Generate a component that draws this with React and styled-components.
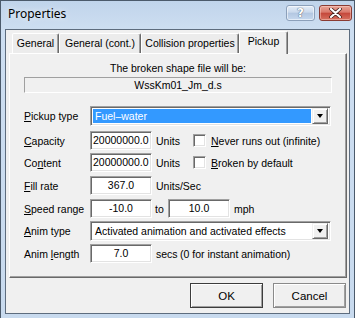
import React from "react";
import styled, { createGlobalStyle, css } from "styled-components";

const GlobalStyle = createGlobalStyle`
  html, body {
    margin: 0;
    padding: 0;
    background: #ffffff;
  }
  body {
    font-family: "Liberation Sans", Arial, sans-serif;
    font-size: 10.5px;
    color: #000;
  }
`;

const TABS = ["General", "General (cont.)", "Collision properties", "Pickup"];
const TAB_WIDTHS = [47, 82, 98, 49];

function PropertiesDialog() {
  return (
    <Window>
      <TitleBar>
        <Title>Properties</Title>
        <CaptionButtons>
          <HelpButton>?</HelpButton>
          <CloseButton>
            <svg width="13" height="10" viewBox="0 0 13 10">
              <path
                d="M2 1 L11 9 M11 1 L2 9"
                stroke="#3b1a16"
                strokeWidth="3.6"
                strokeLinecap="round"
              />
              <path
                d="M2 1 L11 9 M11 1 L2 9"
                stroke="#ffffff"
                strokeWidth="2.2"
                strokeLinecap="round"
              />
            </svg>
          </CloseButton>
        </CaptionButtons>
      </TitleBar>

      <Client>
        <TabStrip>
          {TABS.map((t, i) => (
            <Tab key={t} $w={TAB_WIDTHS[i]} $active={i === 3}>
              {t}
            </Tab>
          ))}
        </TabStrip>

        <Panel>
          <Heading>The broken shape file will be:</Heading>
          <FileField>WssKm01_Jm_d.s</FileField>

          <FormRow $top={13} $h={20}>
            <FieldLabel>
              <u>P</u>ickup type
            </FieldLabel>
            <ComboBox $h={20}>
              <ComboValue $selected>Fuel–water</ComboValue>
              <DropButton>
                <Arrow />
              </DropButton>
            </ComboBox>
          </FormRow>

          <FormRow $top={5}>
            <FieldLabel>
              <u>C</u>apacity
            </FieldLabel>
            <EditBox $align="left">20000000.0</EditBox>
            <UnitText $w={37}>Units</UnitText>
            <CheckBox />
            <CheckText>
              <u>N</u>ever runs out (infinite)
            </CheckText>
          </FormRow>

          <FormRow $top={3}>
            <FieldLabel>
              Co<u>n</u>tent
            </FieldLabel>
            <EditBox $align="left">20000000.0</EditBox>
            <UnitText $w={37}>Units</UnitText>
            <CheckBox />
            <CheckText>
              <u>B</u>roken by default
            </CheckText>
          </FormRow>

          <FormRow $top={4}>
            <FieldLabel>
              <u>F</u>ill rate
            </FieldLabel>
            <EditBox>367.0</EditBox>
            <UnitText>Units/Sec</UnitText>
          </FormRow>

          <FormRow $top={4}>
            <FieldLabel>
              <u>S</u>peed range
            </FieldLabel>
            <EditBox>-10.0</EditBox>
            <UnitText $w={13} $gap={3}>to</UnitText>
            <EditBox>10.0</EditBox>
            <UnitText>mph</UnitText>
          </FormRow>

          <FormRow $top={3} $h={20}>
            <FieldLabel>
              <u>A</u>nim type
            </FieldLabel>
            <ComboBox $h={20}>
              <ComboValue>Activated animation and activated effects</ComboValue>
              <DropButton>
                <Arrow />
              </DropButton>
            </ComboBox>
          </FormRow>

          <FormRow $top={3}>
            <FieldLabel>
              Anim <u>l</u>ength
            </FieldLabel>
            <EditBox>7.0</EditBox>
            <UnitText $w={24}>secs</UnitText>
            <UnitText $gap={0}>(0 for instant animation)</UnitText>
          </FormRow>
        </Panel>

        <ButtonRow>
          <DialogButton $default>OK</DialogButton>
          <DialogButton>Cancel</DialogButton>
        </ButtonRow>
      </Client>
    </Window>
  );
}

export default function App() {
  return (
    <>
      <GlobalStyle />
      <PropertiesDialog />
    </>
  );
}

// Window frame

const Window = styled.div`
  width: 355px;
  height: 318px;
  box-sizing: border-box;
  border: 1px solid #4b5a6b;
  border-bottom: none;
  background: linear-gradient(to bottom, #c0d4eb 0px, #cddef1 28px, #c8daee 100%);
  display: flex;
  flex-direction: column;
`;

const TitleBar = styled.div`
  height: 28px;
  flex: none;
  display: flex;
  align-items: flex-start;
  justify-content: space-between;
  padding: 3px 2px 0 7px;
  box-sizing: border-box;
`;

const Title = styled.div`
  font-family: "Noto Sans", "Open Sans", sans-serif;
  font-size: 12px;
  line-height: 20px;
  color: #000;
  text-shadow: 0 0 6px rgba(255, 255, 255, 0.9);
`;

const CaptionButtons = styled.div`
  display: flex;
  gap: 4px;
  padding-top: 1px;
`;

const captionBase = css`
  height: 16px;
  box-sizing: border-box;
  border-radius: 3px;
  display: flex;
  align-items: center;
  justify-content: center;
`;

const HelpButton = styled.div`
  ${captionBase}
  width: 29px;
  border: 1px solid #8ca0ba;
  background: linear-gradient(to bottom, #e4edf8 0%, #cad9ec 45%, #b3c7e1 50%, #c6d8ee 100%);
  box-shadow: inset 0 0 0 1px rgba(255, 255, 255, 0.55);
  font-family: "DejaVu Sans", sans-serif;
  font-weight: bold;
  font-size: 12px;
  color: #ffffff;
  text-shadow: 0 0 1px #4a5a70, 0 0 1px #4a5a70;
`;

const CloseButton = styled.div`
  ${captionBase}
  width: 33px;
  border: 1px solid #8a3b33;
  background: linear-gradient(to bottom, #e9a497 0%, #d9786a 45%, #c4473a 50%, #d6705f 100%);
  box-shadow: inset 0 0 0 1px rgba(255, 220, 210, 0.45);
`;

const Client = styled.div`
  flex: 1;
  margin: 0 4px 4px 4px;
  border: 1px solid #5d6c7e;
  background: #f0f0f0;
  display: flex;
  flex-direction: column;
  box-sizing: border-box;
`;

// Tabs

const TabStrip = styled.div`
  height: 23px;
  flex: none;
  display: flex;
  align-items: flex-end;
  padding-left: 6px;
`;

const Tab = styled.div`
  width: ${(p) => p.$w}px;
  height: ${(p) => (p.$active ? 23 : 20)}px;
  margin-bottom: ${(p) => (p.$active ? -1 : 0)}px;
  box-sizing: border-box;
  border: 1px solid;
  border-bottom: none;
  border-color: #ffffff #696969 transparent #ffffff;
  box-shadow: inset -1px 0 #a0a0a0;
  border-radius: 2px 2px 0 0;
  background: ${(p) => (p.$active ? "#f0f0f0" : "#ececec")};
  position: relative;
  z-index: ${(p) => (p.$active ? 2 : 1)};
  display: flex;
  align-items: ${(p) => (p.$active ? "flex-start" : "center")};
  padding-top: ${(p) => (p.$active ? 3 : 0)}px;
  justify-content: center;
  white-space: nowrap;
  line-height: 13px;
`;

const Panel = styled.div`
  height: 225px;
  flex: none;
  margin: 0 2px 0 3px;
  box-sizing: border-box;
  border: 1px solid;
  border-color: #ffffff #696969 #696969 #ffffff;
  box-shadow: inset -1px -1px #a0a0a0;
  background: #f0f0f0;
  padding: 7px 14px 0 14px;
  display: flex;
  flex-direction: column;
  position: relative;
  z-index: 1;
`;

const Heading = styled.div`
  height: 14px;
  line-height: 14px;
  text-align: center;
`;

const FileField = styled.div`
  margin-top: 2px;
  height: 16px;
  box-sizing: border-box;
  border: 1px solid;
  border-color: #a0a0a0 #ffffff #ffffff #a0a0a0;
  line-height: 14px;
  text-align: center;
`;

// Form rows

const FormRow = styled.div`
  display: flex;
  align-items: center;
  height: ${(p) => p.$h || 19}px;
  margin-top: ${(p) => p.$top}px;
  white-space: nowrap;
`;

const FieldLabel = styled.div`
  width: 66px;
  flex: none;
`;

const sunken = css`
  box-sizing: border-box;
  border: 1px solid;
  border-color: #a0a0a0 #ffffff #ffffff #a0a0a0;
  box-shadow: inset 1px 1px #696969, inset -1px -1px #e3e3e3;
  background: #ffffff;
`;

const EditBox = styled.div`
  ${sunken}
  width: 62px;
  height: 19px;
  flex: none;
  padding: 0 2px;
  line-height: 17px;
  text-align: ${(p) => p.$align || "center"};
  overflow: hidden;
`;

const UnitText = styled.div`
  flex: none;
  margin-left: ${(p) => (p.$gap === undefined ? 4 : p.$gap)}px;
  width: ${(p) => (p.$w ? `${p.$w}px` : "auto")};
`;

const CheckBox = styled.div`
  ${sunken}
  width: 13px;
  height: 13px;
  flex: none;
`;

const CheckText = styled.div`
  margin-left: 5px;
`;

const ComboBox = styled.div`
  ${sunken}
  width: 241px;
  height: ${(p) => p.$h}px;
  flex: none;
  display: flex;
  align-items: stretch;
  padding: 2px 2px 2px 2px;
`;

const ComboValue = styled.div`
  flex: 1;
  margin-right: 1px;
  padding-left: 2px;
  line-height: 14px;
  background: ${(p) => (p.$selected ? "#3399ff" : "transparent")};
  color: ${(p) => (p.$selected ? "#ffffff" : "#000000")};
  overflow: hidden;
`;

const DropButton = styled.div`
  width: 16px;
  flex: none;
  box-sizing: border-box;
  margin: -1px 0;
  border: 1px solid;
  border-color: #f0f0f0 #696969 #696969 #f0f0f0;
  box-shadow: inset 1px 1px #ffffff, inset -1px -1px #a0a0a0;
  background: #f0f0f0;
  display: flex;
  align-items: center;
  justify-content: center;
`;

const Arrow = styled.div`
  width: 0;
  height: 0;
  border-left: 3.5px solid transparent;
  border-right: 3.5px solid transparent;
  border-top: 4px solid #000000;
`;

// Buttons

const ButtonRow = styled.div`
  display: flex;
  justify-content: flex-end;
  gap: 10px;
  margin-top: 5px;
  padding-right: 3px;
`;

const DialogButton = styled.div`
  width: 73px;
  height: 25px;
  box-sizing: border-box;
  border: 1px solid ${(p) => (p.$default ? "#3c3c3c" : "#8a8a8a")};
  box-shadow: inset 1px 1px #ffffff, inset -1px -1px #a0a0a0;
  background: #f0f0f0;
  display: flex;
  align-items: center;
  justify-content: center;
  font-size: 11.5px;
`;
